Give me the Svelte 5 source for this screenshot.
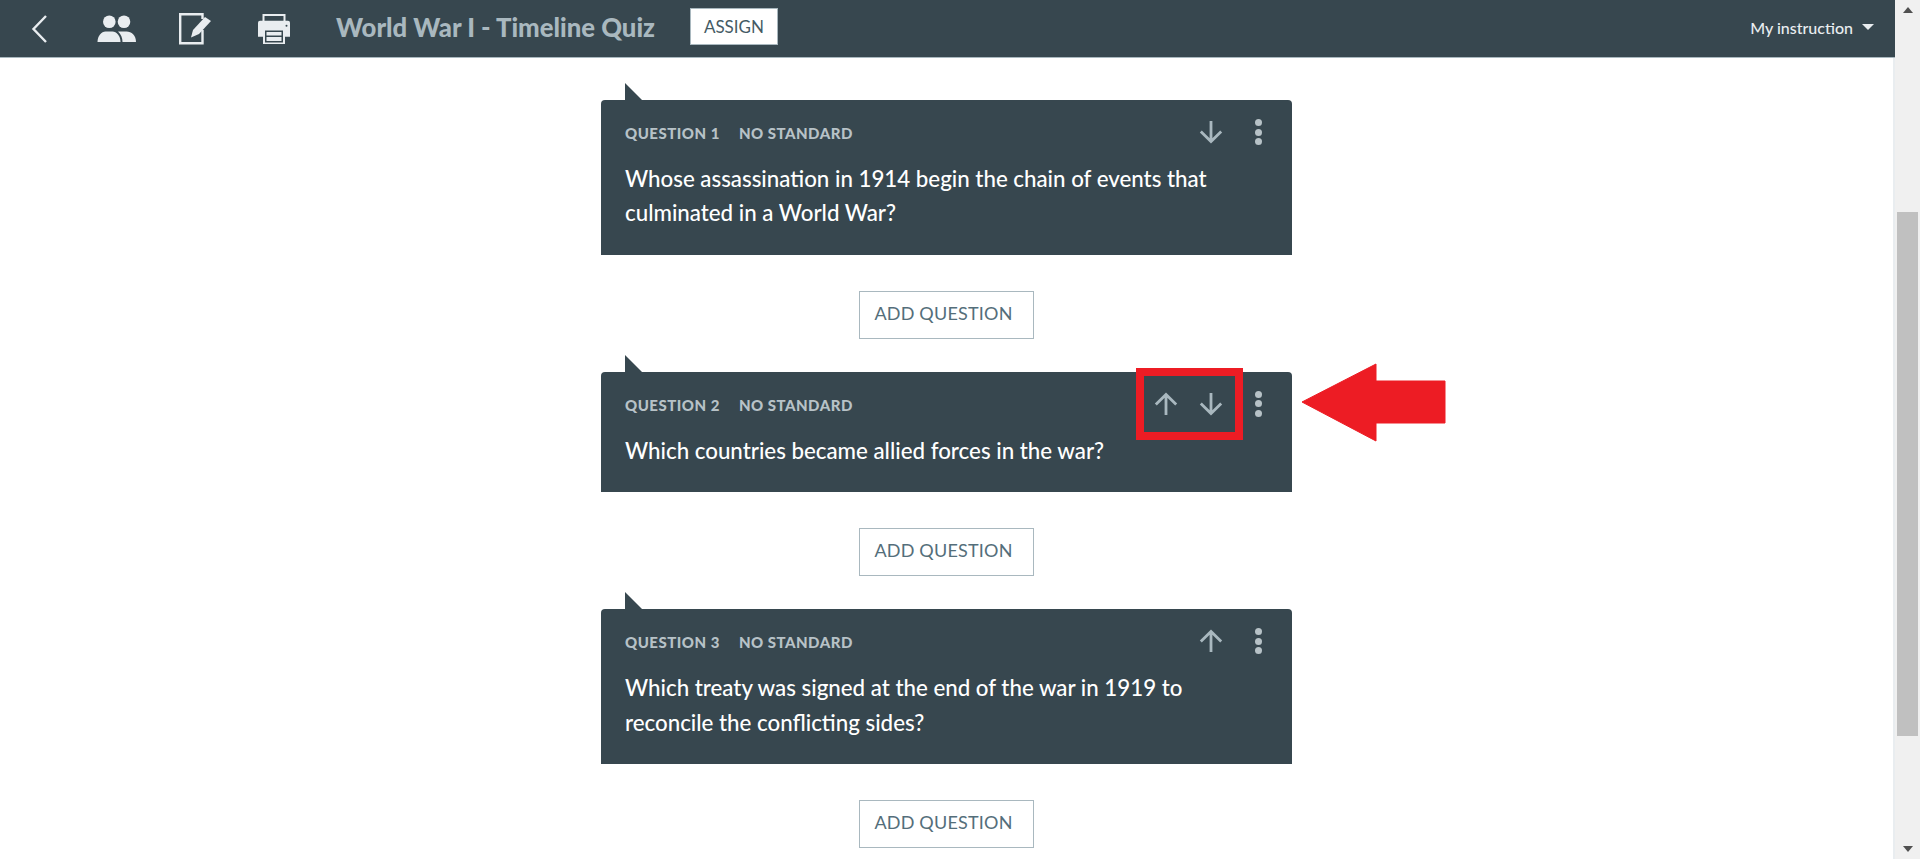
<script lang="ts">
  type Question = { n: number; text: string[]; up: boolean; down: boolean };

  const questions: Question[] = [
    { n: 1, text: ["Whose assassination in 1914 begin the chain of events that", "culminated in a World War?"], up: false, down: true },
    { n: 2, text: ["Which countries became allied forces in the war?"], up: true, down: true },
    { n: 3, text: ["Which treaty was signed at the end of the war in 1919 to", "reconcile the conflicting sides?"], up: true, down: false }
  ];
</script>

<div class="page">
  <div class="main">
    <header class="topbar">
      <div class="nav">
        <svg width="18" height="30" viewBox="0 0 18 30"><path d="M15 2 2.500 15 15 28" fill="none" stroke="#e9edf0" stroke-width="2.400"/></svg>
        <svg class="people" width="40" height="28" viewBox="0 0 40 28">
          <circle cx="12.300" cy="6.700" r="6.300" fill="#e9edf0"/>
          <circle cx="27" cy="6.700" r="6.300" fill="#e9edf0"/>
          <path d="M.5 27c0-6 4-10.500 8-10.500h7c4 0 8 4.500 8 10.500z" fill="#e9edf0"/>
          <path d="M25.500 27c0-4-1.500-8-4.500-10.500h8.500c5 0 9.500 4 9.500 10.500z" fill="#e9edf0"/>
        </svg>
        <svg class="edit" width="33" height="32" viewBox="0 0 33 32">
          <path d="M23.500 6V1.200H1.200v29h22.300V17" fill="none" stroke="#e9edf0" stroke-width="2.400"/>
          <path d="M12 24.500 14 17 26 4l6 4-12 13z" fill="#e9edf0"/>
        </svg>
        <svg class="print" width="32" height="30" viewBox="0 0 32 30">
          <path d="M5.500 7V1h21v6" fill="none" stroke="#e9edf0" stroke-width="2"/>
          <path d="M2 6.700h28a2 2 0 0 1 2 2v14H0v-14a2 2 0 0 1 2-2z" fill="#e9edf0"/>
          <path d="M5 15h22v15H5z" fill="#e9edf0"/>
          <path d="M7 16.500h18v12H7z" fill="#37474f"/>
          <path d="M8.500 18h15v3.500h-15zM8.500 23h15v4h-15z" fill="#e9edf0"/>
          <circle cx="28.500" cy="11.700" r="1" fill="#37474f"/>
        </svg>
      </div>
      <h1 class="title">World War I - Timeline Quiz</h1>
      <button class="assign">ASSIGN</button>
      <div class="account">
        <span>My instruction</span>
        <i class="caret"></i>
      </div>
    </header>

    <div class="list">
      {#each questions as q}
        <section class="card">
          <div class="card-head">
            <div class="labels">
              <span>QUESTION {q.n}</span>
              <span>NO STANDARD</span>
            </div>
            <div class="tools">
              {#if q.up}
                <svg width="24" height="24" viewBox="0 0 24 24"><path d="M12 23V2.500M1.800 12.500 12 2.500l10.200 10" fill="none" stroke="#a9b8bf" stroke-width="2.800"/></svg>
              {/if}
              {#if q.down}
                <svg width="24" height="24" viewBox="0 0 24 24"><path d="M12 1v20.500M1.800 11.500 12 21.500l10.200-10" fill="none" stroke="#a9b8bf" stroke-width="2.800"/></svg>
              {/if}
              <div class="dots"><i></i><i></i><i></i></div>
            </div>
          </div>
          <p class="question">
            {#each q.text as line}<span>{line}</span>{/each}
          </p>
        </section>
        <button class="add">ADD QUESTION</button>
      {/each}
    </div>
  </div>

  <aside class="scrollbar">
    <i class="arrow up"></i>
    <div class="track"><div class="thumb"></div></div>
    <i class="arrow down"></i>
  </aside>

  <!-- annotation drawn on top of the screenshot -->
  <div class="callout-box"></div>
  <svg class="callout-arrow" width="146" height="80" viewBox="0 0 146 80">
    <path d="M1 39 75 1v17h69v42H75v18z" fill="#ed1c24" stroke="#ed1c24" stroke-linejoin="round"/>
  </svg>
</div>

<style>
  :global(body) {
    margin: 0;
    background: #fff;
    overflow: hidden;
  }
  .page {
    position: relative;
    display: flex;
    height: 859px;
    overflow: hidden;
    font-family: Lato, "Open Sans", sans-serif;
  }
  .main {
    flex: 1;
    min-width: 0;
    display: flex;
    flex-direction: column;
  }

  /* top bar */
  .topbar {
    height: 57px;
    flex: none;
    display: flex;
    align-items: center;
    background: #37474f;
    border-bottom: 1px solid #a9b8bf;
    padding: 0 21px 0 31px;
  }
  .nav {
    display: flex;
    align-items: center;
  }
  .people { margin-left: 48px; }
  .edit { margin-left: 42px; }
  .print { margin-left: 46px; }
  .title {
    margin: 0 0 4px 46px;
    font-size: 25.700px;
    font-weight: 900;
    color: #a9b8bf;
    white-space: nowrap;
  }
  .assign {
    margin: 0 0 4px 35px;
    width: 88px;
    height: 37px;
    background: #fff;
    border: 1px solid #a9b8bf;
    color: #455a64;
    font: 400 17px Lato, sans-serif;
    padding: 0 0 1px;
  }
  .account {
    margin-left: auto;
    margin-bottom: 3px;
    display: flex;
    align-items: center;
    gap: 9px;
    color: #e9edf0;
    font-size: 16px;
    font-weight: 500;
  }
  .caret {
    border: 6px solid transparent;
    border-top: 6px solid #e9edf0;
    border-bottom: 0;
  }

  /* question list */
  .list {
    flex: 1;
    display: flex;
    flex-direction: column;
    align-items: center;
    padding-top: 42px;
    border-right: 2px solid #e9edf0;
  }
  .card {
    position: relative;
    box-sizing: border-box;
    width: 691px;
    padding: 17px 24px 24px;
    background: #37474f;
    border-radius: 4px 4px 0 0;
  }
  .card::before {
    content: "";
    position: absolute;
    left: 24px;
    top: -17px;
    border-right: 17px solid transparent;
    border-bottom: 17px solid #37474f;
  }
  .card-head {
    height: 30px;
    display: flex;
    align-items: center;
    justify-content: space-between;
  }
  .labels {
    display: flex;
    gap: 19px;
    font-size: 15px;
    font-weight: 900;
    letter-spacing: 0.5px;
    color: #b7c2c7;
    padding-top: 2px;
  }
  .tools {
    display: flex;
    align-items: center;
    gap: 21px;
    margin-right: 6px;
  }
  .dots {
    display: flex;
    flex-direction: column;
    gap: 2.500px;
    margin-left: 11px;
  }
  .dots i {
    width: 7px;
    height: 7px;
    border-radius: 50%;
    background: #b7c2c7;
  }
  .question {
    margin: 15px 0 0;
    color: #fff;
    font-size: 22.300px;
    font-weight: 500;
    line-height: 34.400px;
  }
  .question span {
    display: block;
    white-space: nowrap;
  }
  .add {
    flex: none;
    width: 175px;
    height: 48px;
    margin: 36px 0 33px;
    background: #fff;
    border: 1px solid #a9b8bf;
    color: #546e7a;
    font: 400 18px Lato, sans-serif;
    letter-spacing: 0.2px;
    padding: 0 6px 4px 0;
  }

  /* browser scrollbar */
  .scrollbar {
    flex: none;
    width: 25px;
    display: flex;
    flex-direction: column;
    align-items: center;
    background: #f0f0f0;
  }
  .track {
    flex: 1;
    align-self: stretch;
    padding: 213px 2px 0;
    margin-top: -21px;
  }
  .thumb {
    height: 524px;
    background: #c0c0c0;
  }
  .arrow {
    flex: none;
    display: block;
    margin: 7px 0;
    border: 5.500px solid transparent;
  }
  .arrow.up { border-top: 0; border-bottom: 6px solid #505050; }
  .arrow.down { border-bottom: 0; border-top: 6px solid #505050; }

  /* annotation */
  .callout-box {
    position: absolute;
    left: 1136px;
    top: 368px;
    width: 91px;
    height: 56px;
    border: 8px solid #ed1c24;
  }
  .callout-arrow {
    position: absolute;
    left: 1301px;
    top: 363px;
  }
</style>
